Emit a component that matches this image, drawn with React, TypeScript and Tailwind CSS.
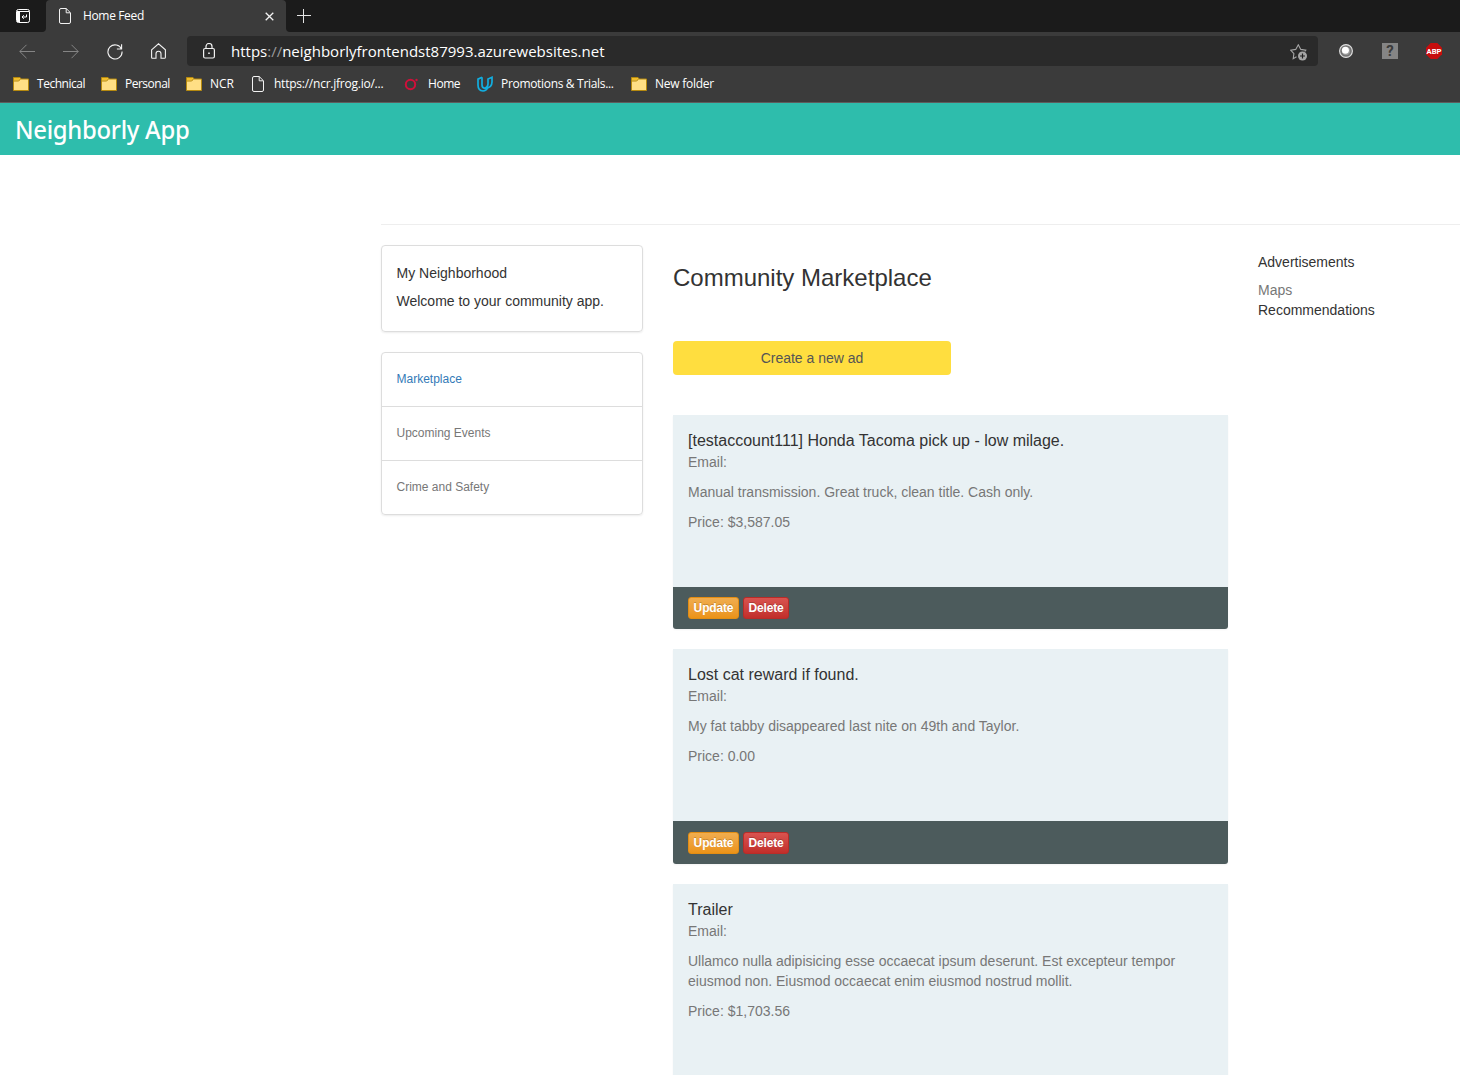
import type { ReactNode } from 'react';

function Folder() {
  return (
    <svg width="16" height="14" viewBox="0 0 16 14" className="shrink-0">
      <path d="M.5.500h6.500l1 1.500h7.500v11.500H.5z" fill="#ffdf85" stroke="#b5890f" />
      <path d="M1 1h5.500l1 1.300L6 3.500H1z" fill="#f0bd2c" />
      <path d="M.5 4h5.200L7.500 2" fill="none" stroke="#b5890f" />
    </svg>
  );
}

function Page() {
  return (
    <svg width="12" height="16" viewBox="0 0 12 16" fill="none" stroke="#f2f2f2" className="shrink-0">
      <path d="M2 .5h5.2l4.3 4.3V14A1.5 1.5 0 0 1 10 15.500H2A1.500 1.500 0 0 1 .5 14V2A1.500 1.500 0 0 1 2 .5z" />
      <path d="M7.200.7V4.800h4.100" />
    </svg>
  );
}

function Bookmark({ icon, label, box, text }: { icon: ReactNode; label: string; box: string; text: string }) {
  return (
    <div className={`flex items-center shrink-0 ${box}`}>
      <div className="w-6 shrink-0 flex items-center">{icon}</div>
      <span className={`whitespace-nowrap text-[12px] leading-4 ${text}`}>{label}</span>
    </div>
  );
}

function Browser() {
  return (
    <div className="h-[103px] bg-[#3b3b3b] border-b border-[#5d5d5d] text-white font-['Open_Sans',sans-serif]">
      <div className="h-8 flex">
        <div className="w-[46px] flex items-center pl-4 bg-[#1b1b1b] rounded-br">
          <svg width="14" height="14" viewBox="0 0 14 14" fill="none" stroke="#fff">
            <rect x=".5" y=".5" width="13" height="13" rx="2" />
            <path d="M1 2.500h12" />
            <path d="M2.500 3v10" strokeWidth="3" />
            <path d="M10.500 5.500v2.500H6M7.800 6.200 6 8l1.800 1.800" />
          </svg>
        </div>
        <div className="w-[240px] bg-[#1b1b1b]">
          <div className="h-8 bg-[#3b3b3b] rounded-t flex items-center pl-[13px]">
            <Page />
            <span className="ml-3 text-[12px] leading-4 tracking-[-0.35px] w-[182px]">Home Feed</span>
            <svg width="9" height="9" viewBox="0 0 9 9" stroke="#f2f2f2" strokeWidth="1.300" className="shrink-0">
              <path d="m.7.7 7.600 7.600M8.300.7.7 8.300" />
            </svg>
          </div>
        </div>
        <div className="flex-1 bg-[#1b1b1b] rounded-bl">
          <svg width="14" height="14" viewBox="0 0 14 14" stroke="#e4e4e4" className="ml-[11px] mt-[9px]">
            <path d="M0 6.500h14M6.500 0v14" />
          </svg>
        </div>
      </div>
      <div className="h-[38px] flex items-center">
        <div className="w-[187px] flex items-center pl-[19px] gap-7">
          <svg width="16" height="15" viewBox="0 0 16 15" fill="none" stroke="#858585">
            <path d="M16 7.500H.8M7.500.8.8 7.500l6.700 6.700" />
          </svg>
          <svg width="16" height="15" viewBox="0 0 16 15" fill="none" stroke="#858585">
            <path d="M0 7.500h15.200M8.500.8l6.700 6.700-6.700 6.700" />
          </svg>
          <svg width="16" height="17" viewBox="0 0 17 17" fill="none" stroke="#f2f2f2" strokeWidth="1.200">
            <path d="M15.500 6.200A7.500 7.500 0 1 0 16 8.500M15.500.8v5h-5" />
          </svg>
          <svg width="15" height="16" viewBox="0 0 15 16" fill="none" stroke="#f2f2f2" strokeWidth="1.100">
            <path d="M.6 6.800 7.500.8l6.900 6v7.400q0 1.100-1.100 1.100H10v-4.500a2.500 2.500 0 0 0-5 0v4.500H1.700q-1.100 0-1.100-1.100z" />
          </svg>
        </div>
        <div className="w-[1131px] h-[30px] rounded bg-[#2a2a2a] flex items-center pl-4 pr-[10px]">
          <svg width="12" height="16" viewBox="0 0 12 16" fill="none" stroke="#f2f2f2" strokeWidth="1.200" className="shrink-0">
            <rect x=".6" y="5.500" width="10.800" height="9.500" rx="1.500" />
            <path d="M3 5.500V3.500a3 3 0 0 1 6 0v2" />
            <path d="M5.200 10.200h1.600" strokeWidth="1.600" />
          </svg>
          <span className="ml-4 text-[15px] leading-5 flex-1 whitespace-nowrap">
            https<span className="text-[#9a9a9a]">://</span>neighborlyfrontendst87993.azurewebsites.net
          </span>
          <svg width="18" height="17" viewBox="0 0 18 17" fill="none" stroke="#a6a6a6" className="mt-0.5">
            <path d="m6.500 12.800-3.300 1.900.7-5L.7 6.200l5-.8L8.300.8l2.500 4.600 5 .8-1 1.300" strokeWidth="1.100" />
            <circle cx="12.500" cy="12" r="4.500" fill="#a6a6a6" stroke="none" />
            <path d="M12.500 9.500v5M10 12h5" stroke="#222" strokeWidth="1.200" />
          </svg>
        </div>
        <svg width="14" height="14" viewBox="0 0 14 14" className="ml-[21px]">
          <circle cx="7" cy="7" r="6.400" fill="#777" stroke="#e2e2e2" strokeWidth="1.100" />
          <circle cx="7" cy="7" r="4.700" fill="#999" stroke="#666" strokeWidth=".6" />
          <circle cx="6.400" cy="6.300" r="3.500" fill="#fff" />
        </svg>
        <div className="ml-[29px] w-4 h-4 bg-[#858585] text-[#3b3b3b] text-[15px] leading-[17px] font-bold text-center font-['Roboto',sans-serif]">?</div>
        <svg width="16" height="16" viewBox="0 0 16 16" className="ml-7">
          <path d="M4.700 0h6.600L16 4.700v6.600L11.300 16H4.700L0 11.300V4.700z" fill="#c70d0d" />
          <text x="8" y="10.900" fill="#fff" fontSize="8" fontWeight="700" textAnchor="middle" textLength="15" lengthAdjust="spacingAndGlyphs" fontFamily="Roboto">
            ABP
          </text>
        </svg>
      </div>
      <div className="h-7 flex items-center pl-[13px]">
        <Bookmark icon={<Folder />} label="Technical" box="w-[88px]" text="tracking-[-0.48px]" />
        <Bookmark icon={<Folder />} label="Personal" box="w-[85px]" text="tracking-[-0.5px]" />
        <Bookmark icon={<Folder />} label="NCR" box="w-[66px]" text="tracking-[-0.1px]" />
        <Bookmark icon={<Page />} label="https://ncr.jfrog.io/..." box="w-[152px]" text="-ml-[2px] tracking-[-0.24px]" />
        <Bookmark
          icon={
            <svg width="15" height="14" viewBox="0 0 15 14">
              <circle cx="6.500" cy="7.500" r="4.700" fill="none" stroke="#d0103a" strokeWidth="2" />
              <circle cx="12.500" cy="3" r="1.200" fill="#d0103a" />
            </svg>
          }
          label="Home"
          box="w-[73px]"
          text="tracking-[-0.45px]"
        />
        <Bookmark
          icon={
            <svg width="16" height="16" viewBox="0 0 16 16" fill="none" stroke="#12aee0" strokeWidth="1.700">
              <path d="M5 1.300 1 3.100V9q0 5.500 5 6 3.300-.2 4.500-3" />
              <path d="M5 1.300V9q0 3 3 3.300" />
              <path d="M8 12.300Q15 12 15 6V1.300L11 3v5q-.2 3-3 4.300" />
            </svg>
          }
          label="Promotions & Trials..."
          box="w-[154px]"
          text="tracking-[-0.32px]"
        />
        <Bookmark icon={<Folder />} label="New folder" box="w-[90px]" text="tracking-[-0.25px]" />
      </div>
    </div>
  );
}

const ads = [
  { title: '[testaccount111] Honda Tacoma pick up - low milage.', text: 'Manual transmission. Great truck, clean title. Cash only.', price: '$3,587.05' },
  { title: 'Lost cat reward if found.', text: 'My fat tabby disappeared last nite on 49th and Taylor.', price: '0.00' },
  {
    title: 'Trailer',
    text: 'Ullamco nulla adipisicing esse occaecat ipsum deserunt. Est excepteur tempor eiusmod non. Eiusmod occaecat enim eiusmod nostrud mollit.',
    price: '$1,703.56',
  },
];

const button = 'h-[22px] rounded-[3px] border text-xs leading-5 font-bold tracking-[-0.15px] text-white bg-linear-to-b [text-shadow:0_-1px_0_rgba(0,0,0,0.2)]';

function Ad({ title, text, price }: (typeof ads)[number]) {
  return (
    <article className="mb-5 rounded-b-[3px] overflow-hidden shadow-[0_1px_2px_rgba(0,0,0,0.05)] text-[#777]">
      <div className="bg-[#e9f1f4] px-[15px] pt-[17px] pb-[55px]">
        <h4 className="text-base leading-[18px] text-[#333]">{title}</h4>
        <p className="mt-[2px] mb-[10px]">Email:</p>
        <p className="mb-[10px]">{text}</p>
        <p>Price: {price}</p>
      </div>
      <div className="h-[42.4px] bg-[#4c5b5c] px-[15px] flex items-center gap-1">
        <button className={`${button} w-[51px] border-[#e38d13] from-[#f0ad4e] to-[#eb9316]`}>Update</button>
        <button className={`${button} w-[46px] border-[#b92c28] from-[#d9534f] to-[#c12e2a]`}>Delete</button>
      </div>
    </article>
  );
}

export default function App() {
  return (
    <div className="w-[1460px] h-[1075px] overflow-hidden bg-white text-sm leading-5 text-[#333] font-['Liberation_Sans',sans-serif]">
      <Browser />
      <header className="h-[52px] bg-[#2ebdac] pl-[15px] flex items-center text-white text-[25px] leading-8 font-medium font-['Noto_Sans',sans-serif]">
        <span className="inline-block origin-left scale-x-[0.955] tracking-[-0.3px]">Neighborly App</span>
      </header>
      <main className="ml-[381px] mt-[69px] border-t border-[#eee] pt-5 flex items-start gap-[30px]">
        <aside className="w-[262px] shrink-0">
          <section className="h-[87px] rounded border border-[#ddd] shadow-[0_1px_2px_rgba(0,0,0,0.075)] px-[14.5px] pt-[17px]">
            <p>My Neighborhood</p>
            <p className="mt-2">Welcome to your community app.</p>
          </section>
          <nav className="mt-5 rounded border border-[#ddd] shadow-[0_1px_2px_rgba(0,0,0,0.075)] divide-y divide-[#ddd] text-xs text-[#777]">
            <a className="h-[54px] px-[14.5px] flex items-center pb-0.5 text-[#337ab7]">Marketplace</a>
            <a className="h-[54px] px-[14.5px] flex items-center pb-px">Upcoming Events</a>
            <a className="h-[53px] px-[14.5px] flex items-center pb-[2px]">Crime and Safety</a>
          </nav>
        </aside>
        <div className="w-[555px] shrink-0">
          <h1 className="mt-5 text-2xl leading-[26px]">Community Marketplace</h1>
          <button className="block mt-[50px] mb-10 w-[278px] h-[34px] rounded bg-[#ffde3f] text-[#555]">Create a new ad</button>
          {ads.map((ad) => (
            <Ad key={ad.title} {...ad} />
          ))}
        </div>
        <aside className="pt-[7px]">
          <p>Advertisements</p>
          <p className="mt-2 text-[#777]">Maps</p>
          <p>Recommendations</p>
        </aside>
      </main>
    </div>
  );
}
